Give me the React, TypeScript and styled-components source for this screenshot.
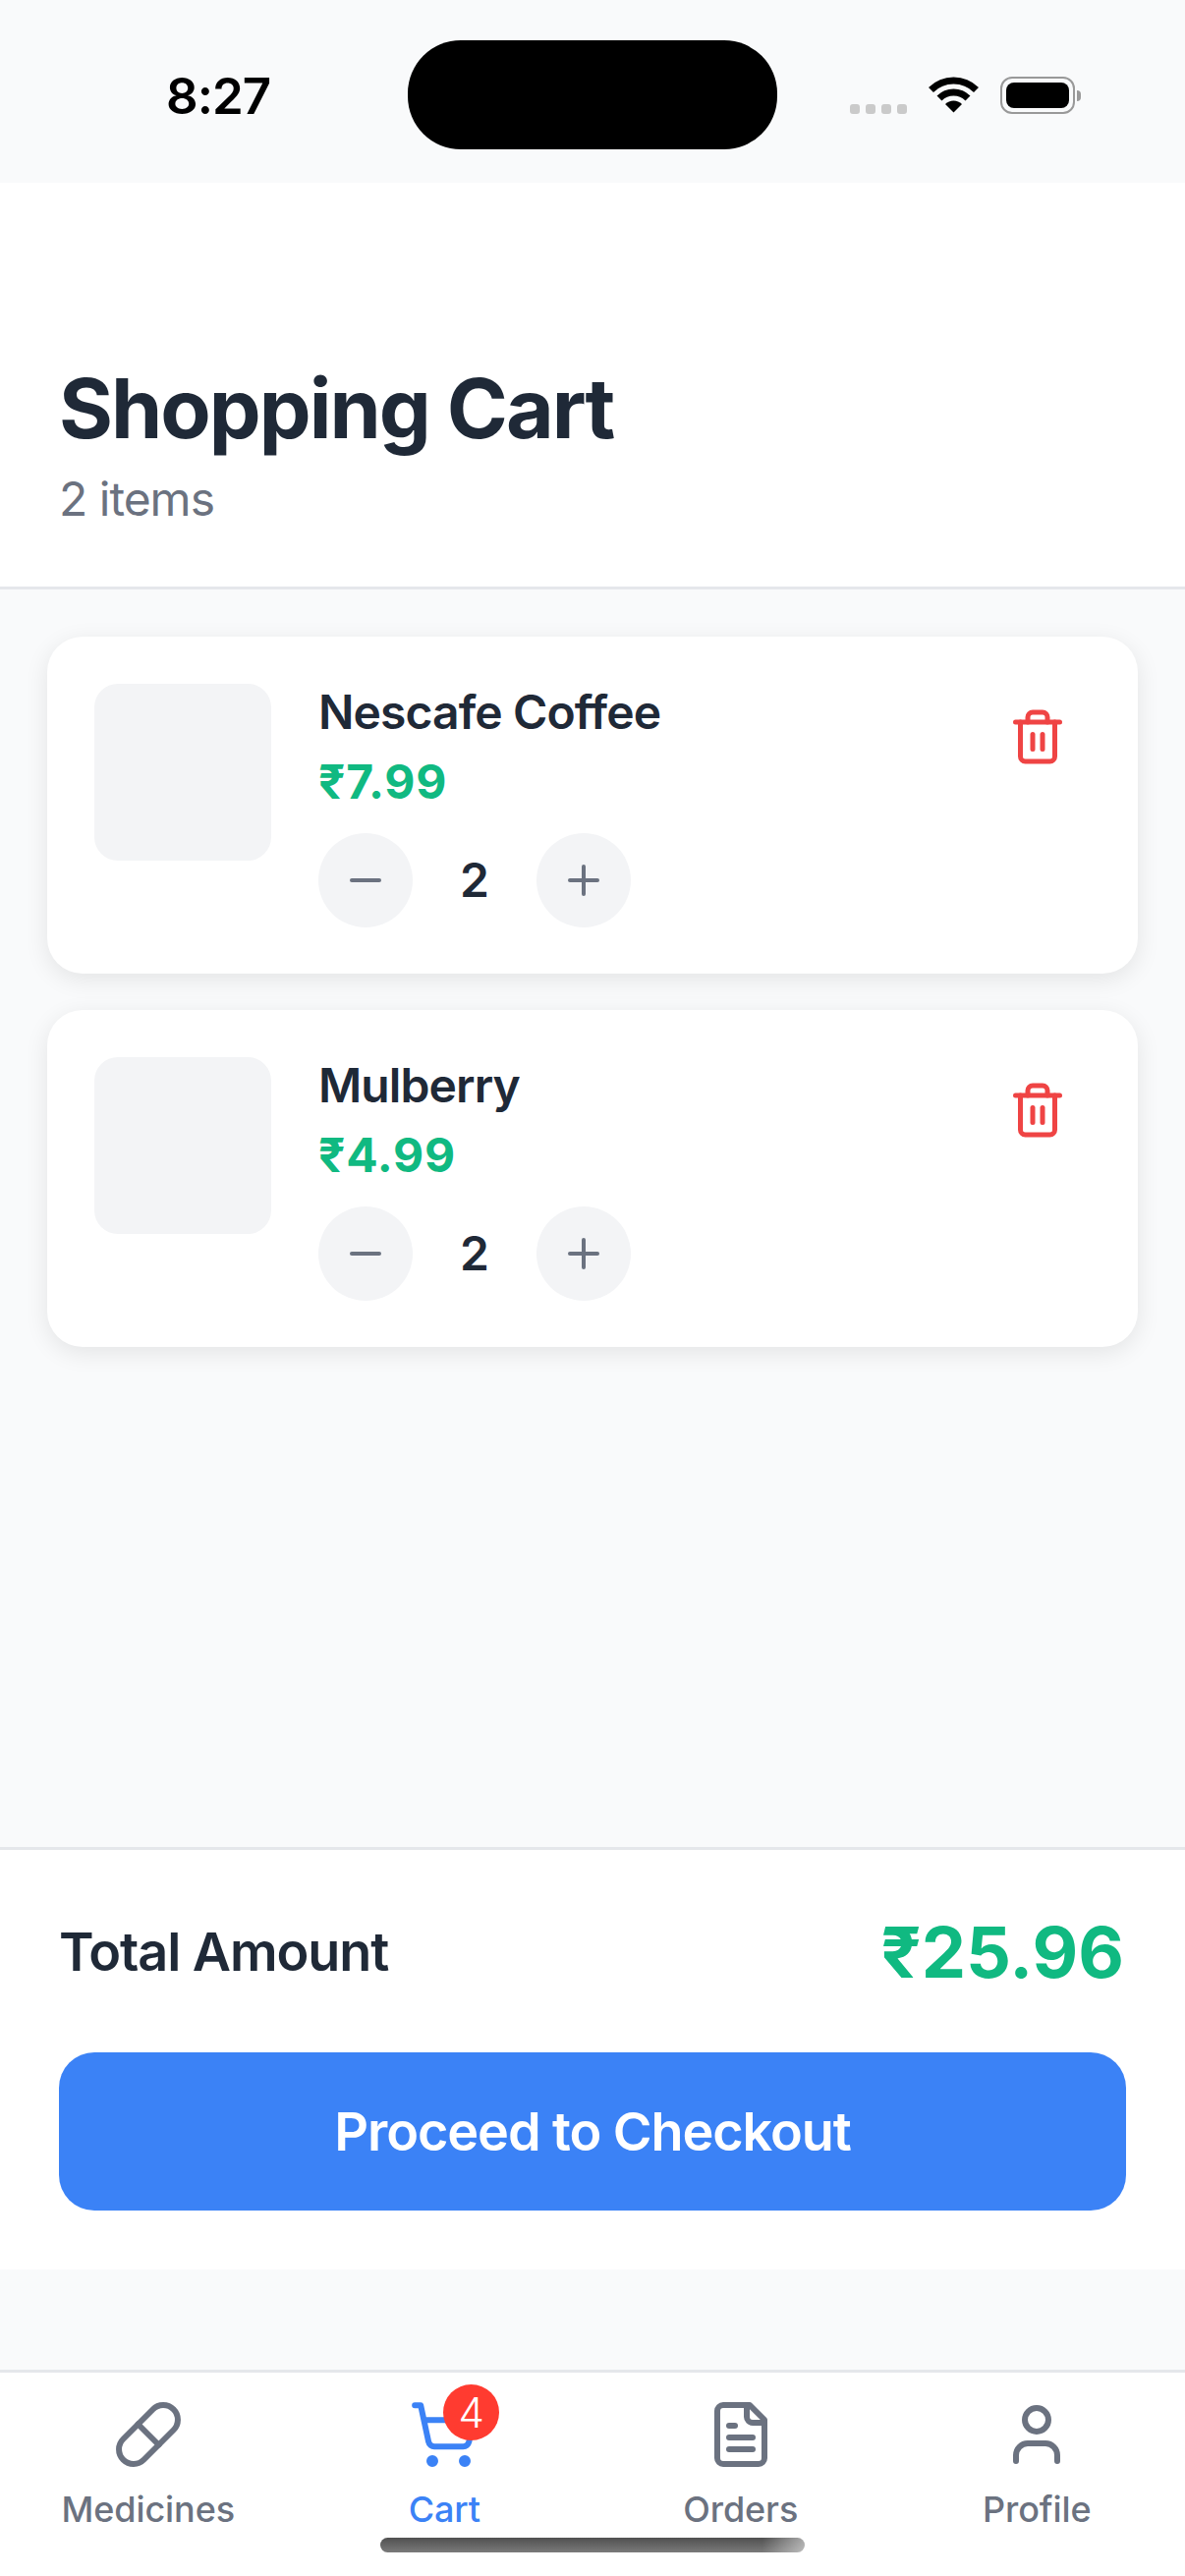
import React from 'react';
import styled, { createGlobalStyle } from 'styled-components';
import { Minus, Pill, Plus, ShoppingCart, Trash2, User } from 'lucide-react';

type CartItemType = {
   name: string;
   price: string;
   quantity: number;
};

const items: CartItemType[] = [
   { name: 'Nescafe Coffee', price: '₹7.99', quantity: 2 },
   { name: 'Mulberry', price: '₹4.99', quantity: 2 },
];

const GlobalStyle = createGlobalStyle`
   * {
      box-sizing: border-box;
   }
   html, body {
      margin: 0;
      padding: 0;
      background: #f9fafb;
   }
   body {
      font-family: Inter, "Liberation Sans", sans-serif;
   }
`;

const FileTextIcon = () => (
   <svg width="72" height="72" viewBox="0 0 24 24" fill="none" stroke="#6b7280" strokeWidth="2" strokeLinecap="round" strokeLinejoin="round">
      <path d="M15 2H6a2 2 0 0 0-2 2v16a2 2 0 0 0 2 2h12a2 2 0 0 0 2-2V7Z" />
      <path d="M14 2v4a2 2 0 0 0 2 2h4" />
      <path d="M10 9H8" />
      <path d="M16 13H8" />
      <path d="M16 17H8" />
   </svg>
);

const WifiIcon = () => (
   <svg width="51" height="37" viewBox="0 0 51 37" fill="none" stroke="#000">
      <path d="M2.5 13.5a32.5 32.5 0 0 1 46 0" strokeWidth="7" />
      <path d="M11 22a20.5 20.5 0 0 1 29 0" strokeWidth="7" />
      <path d="M25.5 36.5 17 28a12 12 0 0 1 17 0Z" fill="#000" stroke="none" />
   </svg>
);

const CartCard = ({ name, price, quantity }: CartItemType) => (
   <Card>
      <Thumb />
      <CardInfo>
         <ItemName>{name}</ItemName>
         <ItemPrice>{price}</ItemPrice>
         <QuantityRow>
            <RoundButton>
               <Minus size={48} color="#6b7280" />
            </RoundButton>
            <Quantity>{quantity}</Quantity>
            <RoundButton>
               <Plus size={48} color="#6b7280" />
            </RoundButton>
         </QuantityRow>
      </CardInfo>
      <RemoveButton>
         <Trash2 size={60} color="#ef4444" />
      </RemoveButton>
   </Card>
);

export default function App() {
   return (
      <Screen>
         <GlobalStyle />
         <StatusBar>
            <StatusTime>8:27</StatusTime>
            <Island />
            <StatusIcons>
               <SignalDots>
                  <SignalDot />
                  <SignalDot />
                  <SignalDot />
                  <SignalDot />
               </SignalDots>
               <WifiIcon />
               <Battery>
                  <BatteryFill />
                  <BatteryNub />
               </Battery>
            </StatusIcons>
         </StatusBar>

         <Header>
            <Title>Shopping Cart</Title>
            <Subtitle>2 items</Subtitle>
         </Header>

         <CartList>
            {items.map((item) => (
               <CartCard key={item.name} {...item} />
            ))}
         </CartList>

         <Footer>
            <TotalRow>
               <TotalLabel>Total Amount</TotalLabel>
               <TotalValue>₹25.96</TotalValue>
            </TotalRow>
            <CheckoutButton>Proceed to Checkout</CheckoutButton>
         </Footer>

         <TabBar>
            <Tab>
               <TabIcon>
                  <Pill size={72} color="#6b7280" />
               </TabIcon>
               <TabLabel>Medicines</TabLabel>
            </Tab>
            <Tab>
               <TabIcon>
                  <ShoppingCart size={72} color="#3b82f6" />
                  <Badge>4</Badge>
               </TabIcon>
               <TabLabel $active>Cart</TabLabel>
            </Tab>
            <Tab>
               <TabIcon>
                  <FileTextIcon />
               </TabIcon>
               <TabLabel>Orders</TabLabel>
            </Tab>
            <Tab>
               <TabIcon>
                  <User size={72} color="#6b7280" />
               </TabIcon>
               <TabLabel>Profile</TabLabel>
            </Tab>
            <HomeIndicator />
         </TabBar>
      </Screen>
   );
}

const Screen = styled.div`
   width: 1206px;
   height: 2622px;
   display: flex;
   flex-direction: column;
   background: #f9fafb;
   overflow: hidden;
`;

const StatusBar = styled.div`
   height: 186px;
   flex-shrink: 0;
   padding-top: 41px;
   display: grid;
   grid-template-columns: 1fr 376px 1fr;
   background: #f9fafb;
`;
const StatusTime = styled.div`
   padding: 26px 0 0 169px;
   font-size: 51px;
   line-height: 62px;
   font-weight: 600;
   letter-spacing: -1px;
   color: #000;
`;
const Island = styled.div`
   height: 111px;
   border-radius: 54px;
   background: #000;
`;
const StatusIcons = styled.div`
   padding: 37px 0 0 74px;
   display: flex;
   align-items: flex-start;
`;
const SignalDots = styled.div`
   margin: 28px 22px 0 0;
   display: flex;
   gap: 6px;
`;
const SignalDot = styled.span`
   width: 10px;
   height: 10px;
   border-radius: 3px;
   background: #cacaca;
`;
const Battery = styled.div`
   position: relative;
   width: 76px;
   height: 38px;
   margin-left: 22px;
   padding: 4px;
   border: 2px solid #999;
   border-radius: 12px;
`;
const BatteryFill = styled.div`
   height: 100%;
   border-radius: 8px;
   background: #000;
`;
const BatteryNub = styled.span`
   position: absolute;
   top: 12px;
   right: -8px;
   width: 4px;
   height: 11px;
   border-radius: 0 4px 4px 0;
   background: #999;
`;

const Header = styled.div`
   height: 414px;
   flex-shrink: 0;
   padding: 179px 60px 0;
   background: #fff;
   border-bottom: 3px solid #e5e7eb;
`;
const Title = styled.h1`
   margin: 0;
   font-size: 84px;
   line-height: 102px;
   font-weight: 700;
   letter-spacing: -2px;
   color: #1f2937;
`;
const Subtitle = styled.p`
   margin: 12px 0 0;
   font-size: 48px;
   line-height: 58px;
   font-weight: 400;
   letter-spacing: -1px;
   color: #6b7280;
`;

const CartList = styled.div`
   flex: 1;
   padding: 48px;
   display: flex;
   flex-direction: column;
   gap: 37px;
`;
const Card = styled.div`
   height: 343px;
   padding: 48px;
   display: flex;
   gap: 48px;
   border-radius: 36px;
   background: #fff;
   box-shadow: 0 6px 24px rgba(0, 0, 0, 0.09);
`;
const Thumb = styled.div`
   width: 180px;
   height: 180px;
   flex-shrink: 0;
   border-radius: 24px;
   background: #f3f4f6;
`;
const CardInfo = styled.div`
   flex: 1;
   display: flex;
   flex-direction: column;
`;
const ItemName = styled.div`
   font-size: 48px;
   line-height: 58px;
   font-weight: 600;
   letter-spacing: -0.9px;
   color: #1f2937;
`;
const ItemPrice = styled.div`
   margin-top: 13px;
   font-size: 48px;
   line-height: 58px;
   font-weight: 700;
   letter-spacing: 0.8px;
   color: #10b981;
`;
const QuantityRow = styled.div`
   margin-top: 23px;
   display: flex;
   align-items: center;
`;
const RoundButton = styled.div`
   width: 96px;
   height: 96px;
   display: flex;
   align-items: center;
   justify-content: center;
   border-radius: 50%;
   background: #f3f4f6;
`;
const Quantity = styled.div`
   width: 126px;
   margin-top: -2px;
   text-align: center;
   font-size: 48px;
   font-weight: 600;
   color: #1f2937;
`;
const RemoveButton = styled.div`
   align-self: flex-start;
   padding: 24px;
   display: flex;
`;

const Footer = styled.div`
   height: 430px;
   flex-shrink: 0;
   margin-bottom: 102px;
   padding: 50px 60px 0;
   background: #fff;
   border-top: 3px solid #e5e7eb;
`;
const TotalRow = styled.div`
   height: 106px;
   display: flex;
   align-items: center;
   justify-content: space-between;
`;
const TotalLabel = styled.div`
   font-size: 54px;
   font-weight: 600;
   letter-spacing: -1.1px;
   color: #1f2937;
`;
const TotalValue = styled.div`
   margin-right: 2px;
   font-size: 72px;
   font-weight: 700;
   color: #10b981;
`;
const CheckoutButton = styled.div`
   height: 161px;
   margin-top: 50px;
   display: flex;
   align-items: center;
   justify-content: center;
   border-radius: 36px;
   background: #3b82f6;
   font-size: 54px;
   font-weight: 600;
   letter-spacing: -1.1px;
   color: #fff;
`;

const TabBar = styled.div`
   position: relative;
   height: 210px;
   flex-shrink: 0;
   padding-top: 27px;
   display: grid;
   grid-template-columns: repeat(4, 1fr);
   background: #fff;
   border-top: 3px solid #e5e7eb;
`;
const Tab = styled.div`
   display: flex;
   flex-direction: column;
   align-items: center;
`;
const TabIcon = styled.div`
   position: relative;
   width: 72px;
   height: 72px;
`;
const TabLabel = styled.span<{ $active?: boolean }>`
   margin-top: 18px;
   font-size: 36px;
   line-height: 44px;
   font-weight: 500;
   letter-spacing: -0.1px;
   color: ${(props) => (props.$active ? '#3b82f6' : '#6b7280')};
`;
const Badge = styled.div`
   position: absolute;
   top: -15px;
   left: 35px;
   width: 57px;
   height: 57px;
   display: flex;
   align-items: center;
   justify-content: center;
   border-radius: 50%;
   background: #ff3b30;
   font-size: 42px;
   font-weight: 300;
   color: #fff;
`;
const HomeIndicator = styled.div`
   position: absolute;
   left: 387px;
   top: 168px;
   width: 432px;
   height: 15px;
   border-radius: 8px;
   background: linear-gradient(90deg, rgba(255, 255, 255, 0) 90%, rgba(255, 255, 255, 0.5) 100%),
      linear-gradient(180deg, #505050 0%, #7a7a7a 100%);
`;
